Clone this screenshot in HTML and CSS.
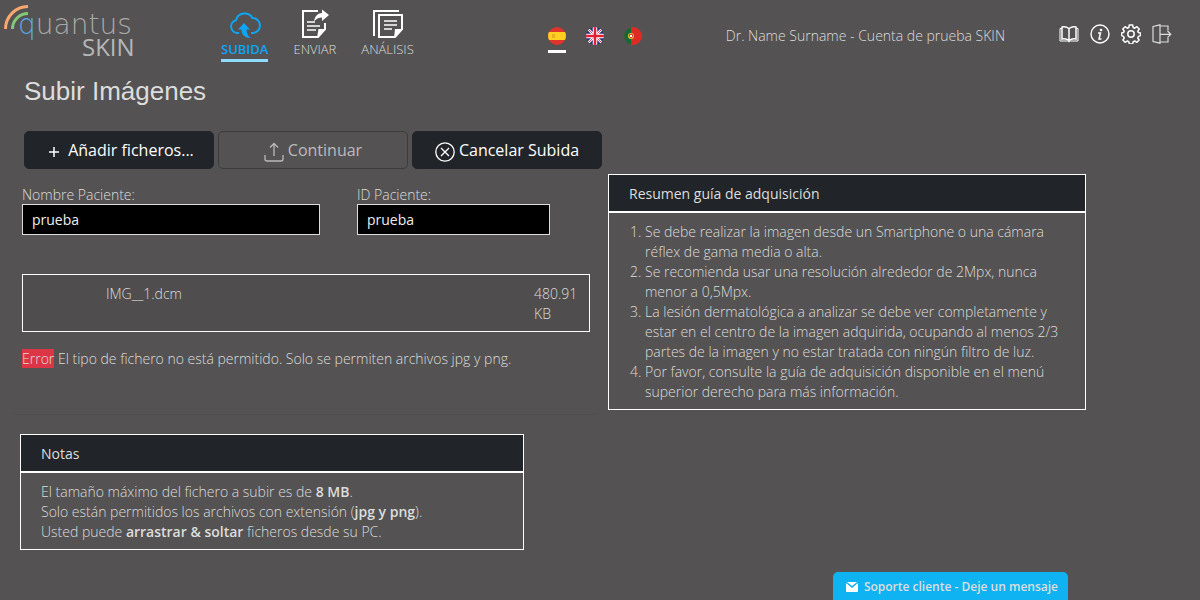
FILE: index.html
```html
<!DOCTYPE html>
<html lang="es">
<head>
    <meta charset="UTF-8" />
    <meta name="viewport" content="width=device-width, initial-scale=1" />
    <title>Quantus Skin - Subir Imágenes</title>
    <link rel="stylesheet" href="styles.css">
</head>
<body>
    <header class="topbar">
        <a href="#" class="logo">
            <svg width="140" height="68" viewBox="0 0 140 68">
                <path d="M5.500 29 A22.500 22.500 0 0 1 28 6.500" fill="none" stroke="#f9a870" stroke-width="3"/>
                <path d="M12.500 29 A15.500 15.500 0 0 1 28 13.500" fill="none" stroke="#83c877" stroke-width="3"/>
                <text x="18" y="34" class="logo-name"><tspan class="logo-q">q</tspan>uantus</text>
                <text x="82" y="56" class="logo-skin">SKIN</text>
            </svg>
        </a>

        <nav class="menu">
            <a href="#" class="menu-item active">
                <svg width="32" height="32" viewBox="0 0 32 32">
                    <path d="M10 25H8.500A6.500 6.500 0 0 1 7 12.200 A9 9 0 0 1 23.500 10 A7.500 7.500 0 0 1 23.500 25H22" fill="none" stroke="#0fa5f5" stroke-width="2"/>
                    <path d="M15 15l6 6.500h-3.500c0 4 1.500 6.500 4.500 8.500c-6 0-9.500-3-9.500-8.500H9z" fill="#0fa5f5"/>
                </svg>
                <span>SUBIDA</span>
            </a>
            <a href="#" class="menu-item">
                <svg width="32" height="32" viewBox="0 0 32 32">
                    <path d="M19 3H4v26h15l7-8v-6" fill="none" stroke="#fff" stroke-width="2"/>
                    <path d="M18 30l1.500-9H27z" fill="#fff"/>
                    <path d="M15 13c1-5 4-8 8-8V1.500L30 7l-7 6V9.500c-3 0-5 1-8 3.500z" fill="#fff"/>
                    <path d="M8 14h8M8 18h13M8 22h9" stroke="#fff" stroke-width="1.500"/>
                </svg>
                <span>ENVIAR</span>
            </a>
            <a href="#" class="menu-item">
                <svg width="32" height="32" viewBox="0 0 32 32">
                    <path d="M2 28V3h25" fill="none" stroke="#fff" stroke-width="2"/>
                    <path d="M30 7H7v22h16l7-8z" fill="none" stroke="#fff" stroke-width="2"/>
                    <path d="M22 30l1-9h8z" fill="#fff"/>
                    <path d="M12 13h13M12 17h13M12 21h8" stroke="#fff" stroke-width="1.500"/>
                </svg>
                <span>ANÁLISIS</span>
            </a>
        </nav>

        <div class="languages">
            <a href="#" class="lang selected" aria-label="Español">
                <svg width="18" height="18" viewBox="0 0 18 18">
                    <clipPath id="round"><circle cx="9" cy="9" r="9"/></clipPath>
                    <g clip-path="url(#round)">
                        <path d="M0 0h18v18H0z" fill="#e0352b"/>
                        <path d="M0 5h18v8H0z" fill="#ffcf1f"/>
                        <path d="M4 7h3v4H4z" fill="#e8ad25"/>
                    </g>
                </svg>
            </a>
            <a href="#" class="lang" aria-label="English">
                <svg width="18" height="18" viewBox="0 0 18 18">
                    <g clip-path="url(#round)">
                        <path d="M0 0h18v18H0z" fill="#29337a"/>
                        <path d="M0 0l18 18M18 0L0 18" stroke="#fff" stroke-width="2.500"/>
                        <path d="M0 0l18 18M18 0L0 18" stroke="#e63a48" stroke-width="1"/>
                        <path d="M9 0v18M0 9h18" stroke="#fff" stroke-width="4.500"/>
                        <path d="M9 0v18M0 9h18" stroke="#e01f35" stroke-width="2.500"/>
                    </g>
                </svg>
            </a>
            <a href="#" class="lang" aria-label="Português">
                <svg width="18" height="18" viewBox="0 0 18 18">
                    <g clip-path="url(#round)">
                        <path d="M0 0h18v18H0z" fill="#dd2c24"/>
                        <path d="M0 0h7v18H0z" fill="#14693a"/>
                        <circle cx="7" cy="9" r="3" fill="#e8c52a"/>
                        <path d="M5.500 7.500h3v2l-1.500 1.500-1.500-1.500z" fill="#fff" stroke="#d33" stroke-width="1"/>
                    </g>
                </svg>
            </a>
        </div>

        <div class="user">Dr. Name Surname - Cuenta de prueba SKIN</div>

        <div class="tools">
            <a href="#" aria-label="Manual">
                <svg width="20" height="20" viewBox="0 0 20 20" fill="none" stroke="#fff" stroke-width="1.500">
                    <path d="M10 4.500C8 3 5 2.500 3 3v12c2-.5 5 0 7 1.500c2-1.500 5-2 7-1.500V3c-2-.5-5 0-7 1.500zM10 4.500v12"/>
                    <path d="M3 4.500H1V17h7.500l1.500 1 1.500-1H19V4.500h-2" stroke-width="1"/>
                </svg>
            </a>
            <a href="#" aria-label="Información">
                <svg width="20" height="20" viewBox="0 0 20 20">
                    <circle cx="10" cy="10" r="9" fill="none" stroke="#fff" stroke-width="1.400"/>
                    <circle cx="11" cy="6" r="1.300" fill="#fff"/>
                    <path d="M8 9h2.500l-1.500 6h2.500" fill="none" stroke="#fff" stroke-width="1.500"/>
                </svg>
            </a>
            <a href="#" aria-label="Configuración">
                <svg width="20" height="20" viewBox="0 0 20 20" fill="none" stroke="#fff" stroke-width="1.500" stroke-linejoin="round">
                    <path d="M8.300 1h3.400l.5 2.500 1.500.7 2.200-1.500 2.300 2.300-1.400 2.200.7 1.400 2 .4v2.600l-2 .8-.7 1.600 1.300 2-2.200 2.300-2.200-1.300-1.500.6-.5 2.400H8.300l-.5-2.400-1.500-.6-2.200 1.300L1.900 16l1.300-2-.7-1.600-2-.8V9l2-.4.700-1.400L1.800 5l2.300-2.300 2.200 1.500 1.500-.7z"/>
                    <circle cx="10" cy="10" r="3.200"/>
                </svg>
            </a>
            <a href="#" aria-label="Salir">
                <svg width="20" height="20" viewBox="0 0 20 20" fill="none" stroke="#ddd" stroke-width="1.200">
                    <path d="M1 2.500L8 .8v18.400L1 17.500zM8 2h8v4.500M16 14v4H8M8 10.300h11M15.500 7l3.300 3.300-3.300 3.400"/>
                </svg>
            </a>
        </div>
    </header>

    <main class="content">
        <section class="upload">
            <h1>Subir Imágenes</h1>

            <div class="actions">
                <button type="button" class="btn">
                    <svg width="20" height="20" viewBox="0 0 20 20" fill="none" stroke="#fff" stroke-width="1.500"><path d="M10 5v10M5 10h10"/></svg>
                    Añadir ficheros...
                </button>
                <button type="button" class="btn btn-off" disabled>
                    <svg width="20" height="20" viewBox="0 0 20 20" fill="none" stroke="#bbb" stroke-width="1.300"><path d="M1 13v4q0 2 2 2h14q2 0 2-2v-4M10 14V1.500M6 5.500l4-4 4 4"/></svg>
                    Continuar
                </button>
                <button type="button" class="btn">
                    <svg width="20" height="20" viewBox="0 0 20 20" fill="none" stroke="#fff" stroke-width="1.300"><circle cx="10" cy="10" r="9.200"/><path d="M6 6l8 8M14 6l-8 8"/></svg>
                    Cancelar Subida
                </button>
            </div>

            <div class="card">
                <form class="patient">
                    <div class="field name">
                        <label for="patientName">Nombre Paciente:</label>
                        <input type="text" id="patientName" value="prueba" />
                    </div>
                    <div class="field pid">
                        <label for="patientId">ID Paciente:</label>
                        <input type="text" id="patientId" value="prueba" />
                    </div>
                </form>

                <div class="file">
                    <span class="file-name">IMG__1.dcm</span>
                    <span class="file-size">480.91 KB</span>
                </div>

                <p class="error"><span class="tag">Error</span> El tipo de fichero no está permitido. Solo se permiten archivos jpg y png.</p>
            </div>

            <div class="panel notes">
                <h2>Notas</h2>
                <div class="panel-body">
                    El tamaño máximo del fichero a subir es de <strong>8 MB</strong>.<br>
                    Solo están permitidos los archivos con extensión (<strong>jpg y png</strong>).<br>
                    Usted puede <strong>arrastrar &amp; soltar</strong> ficheros desde su PC.
                </div>
            </div>
        </section>

        <aside class="panel guide">
            <h2>Resumen guía de adquisición</h2>
            <ol class="panel-body">
                <li>Se debe realizar la imagen desde un Smartphone o una cámara réflex de gama media o alta.</li>
                <li>Se recomienda usar una resolución alrededor de 2Mpx, nunca menor a 0,5Mpx.</li>
                <li>La lesión dermatológica a analizar se debe ver completamente y estar en el centro de la imagen adquirida, ocupando al menos 2/3 partes de la imagen y no estar tratada con ningún filtro de luz.</li>
                <li>Por favor, consulte la guía de adquisición disponible en el menú superior derecho para más información.</li>
            </ol>
        </aside>
    </main>

    <a href="#" class="support">
        <svg width="12" height="10" viewBox="0 0 12 10"><path d="M0 1l6 5 6-5v8q0 1-1 1H1q-1 0-1-1zM1 0h10L6 4z" fill="#fff"/></svg>
        Soporte cliente - Deje un mensaje
    </a>
</body>
</html>
```

FILE: styles.css
```css
* {
    box-sizing: border-box;
}
body {
    margin: 0;
    background-color: #545252;
    color: #dddddd;
    font-family: 'Open Sans', sans-serif;
    font-size: 14px;
    font-weight: 300;
    line-height: 20px;
}
a {
    color: inherit;
    text-decoration: none;
}
svg {
    display: block;
    flex-shrink: 0;
}

/* top bar */
.topbar {
    display: flex;
    align-items: flex-start;
    height: 72px;
    padding-right: 28px;
}
.logo-name {
    font-family: 'DejaVu Sans Light', 'DejaVu Sans', sans-serif;
    font-size: 28px;
    font-weight: 200;
    fill: #a9a9a9;
}
.logo-q {
    fill: #5aa9e6;
}
.logo-skin {
    font-size: 24px;
    font-weight: 400;
    fill: #b5b8b8;
}
.menu {
    display: flex;
    gap: 25px;
    margin-left: 81px;
    padding-top: 8px;
}
.menu-item {
    display: flex;
    flex-direction: column;
    align-items: center;
    font-size: 13px;
    border-bottom: 3px solid transparent;
}
.menu-item span {
    line-height: 19px;
}
.menu-item.active {
    color: #0fa5f5;
    font-weight: 600;
    border-color: #8ddcff;
}
.languages {
    display: flex;
    gap: 20px;
    margin-left: auto;
    padding-top: 27px;
}
.lang {
    padding-bottom: 5px;
    border-bottom: 3px solid transparent;
}
.lang.selected {
    border-color: #fff;
}
.user {
    margin-left: 84px;
    padding-top: 26px;
}
.tools {
    display: flex;
    gap: 11px;
    margin-left: 54px;
    padding-top: 24px;
}

/* main area */
.content {
    display: grid;
    grid-template-columns: 598fr 478fr;
    align-items: start;
    padding: 0 114px 0 10px;
}
.upload {
    padding-left: 12px;
}
h1 {
    margin: 4px 2px 25px;
    font-family: 'Liberation Sans', Arial, sans-serif;
    font-size: 26px;
    font-weight: 400;
    line-height: 30px;
}
.actions {
    display: flex;
    gap: 4px;
    margin-left: 2px;
}
.btn {
    display: flex;
    align-items: center;
    justify-content: center;
    gap: 4px;
    width: 190px;
    height: 38px;
    padding: 0;
    font-family: 'Open Sans', sans-serif;
    font-size: 16px;
    color: #fff;
    background-color: #212529;
    border: 1px solid #212529;
    border-radius: 5px;
}
.btn svg {
    margin-top: 3px;
}
.btn-off {
    color: #bbb;
    background-color: transparent;
    border-color: #3a3d3d;
}
.card {
    margin: 0 8px 0 -10px;
    padding: 16px 10px 45px;
    border-bottom: 1px solid #504e4e;
    border-radius: 0 0 5px 5px;
}
.patient {
    display: flex;
    gap: 37px;
}
.field {
    display: flex;
    flex-direction: column;
}
.name {
    width: 298px;
}
.pid {
    width: 193px;
}
.field label {
    line-height: 19px;
}
.field input {
    width: 100%;
    height: 31px;
    padding: 0 9px;
    font-family: 'Open Sans', sans-serif;
    font-size: 14px;
    color: #eee;
    background-color: #000;
    border: 1px solid #ddd;
}
.file {
    display: flex;
    justify-content: space-between;
    margin-top: 39px;
    padding: 9px 9px 7px 83px;
    background-color: #4f4d4d;
    border: 1px solid #fff;
}
.file-size {
    width: 46px;
}
.error {
    margin: 17px 0 0;
}
.tag {
    background-color: #dc3545;
}

/* bordered panels */
.panel {
    border: 1px solid #fff;
}
.panel h2 {
    margin: 0;
    padding: 9px 20px 7px;
    font-size: 14px;
    font-weight: 400;
    line-height: 20px;
    background-color: #212529;
    border-bottom: 2px solid #fff;
}
.panel-body {
    margin: 0;
    padding: 9px 20px 7px;
}
.panel-body strong {
    font-weight: 600;
}
.guide {
    margin-top: 102px;
}
.guide ol {
    padding-left: 36px;
}
.notes {
    max-width: 504px;
    margin-top: 19px;
    margin-left: -2px;
}

/* chat tab */
.support {
    position: fixed;
    right: 132px;
    bottom: 0;
    display: flex;
    align-items: center;
    gap: 6px;
    height: 28px;
    padding: 2px 10px 0 13px;
    font-size: 12px;
    font-weight: 600;
    background-color: #0fb3f2;
    border-radius: 5px 5px 0 0;
}
```
